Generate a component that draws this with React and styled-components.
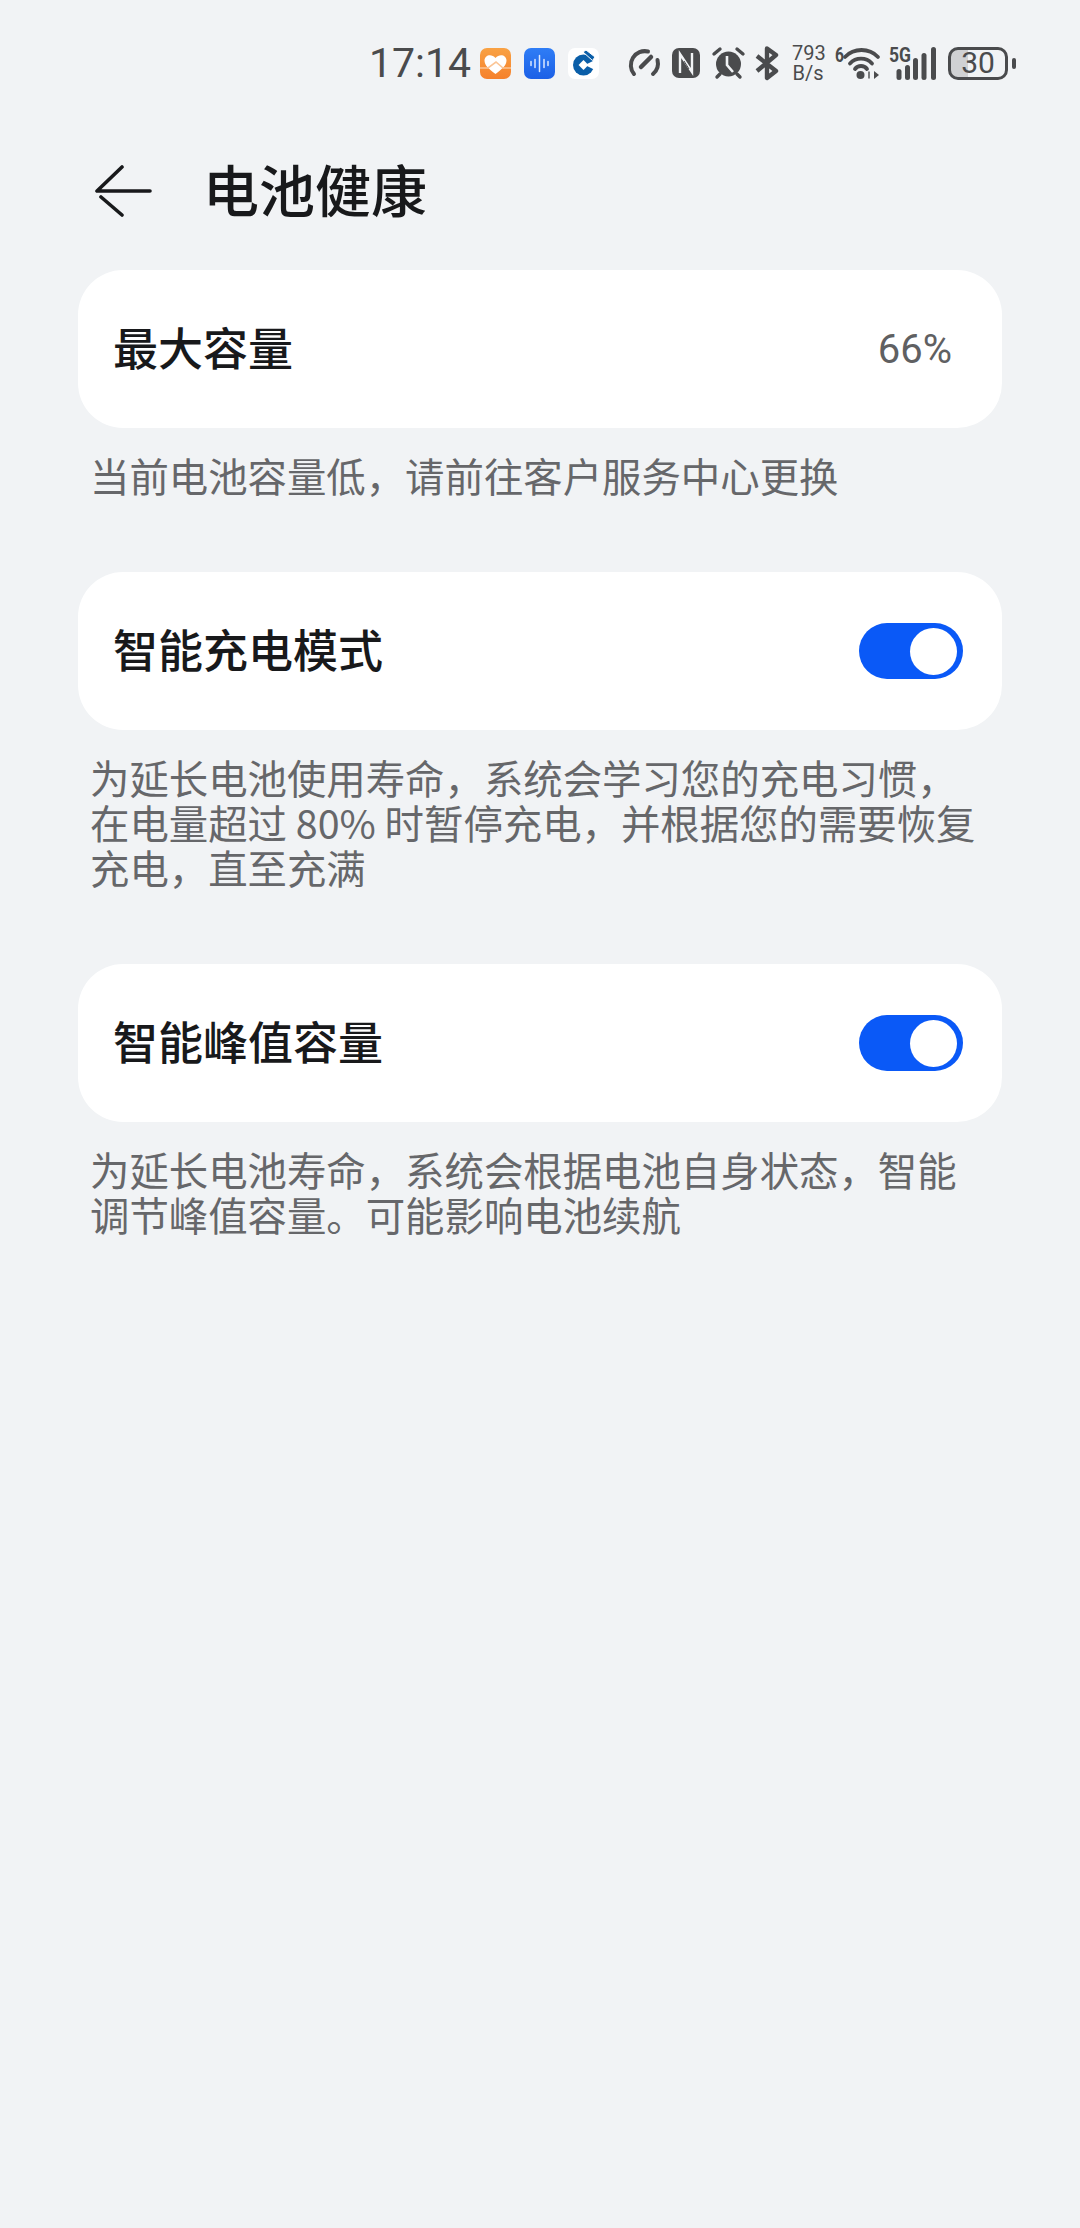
import React from 'react';
import styled, { createGlobalStyle } from 'styled-components';

const ink = '#4a4b4d';
const bg = '#f1f3f5';

const Global = createGlobalStyle`
  html, body { margin: 0; padding: 0; background: #f1f3f5; }
  * { box-sizing: border-box; }
`;

const Page = styled.div`
  width: 1080px;
  height: 2228px;
  overflow: hidden;
  background: #f1f3f5;
  font-family: "Noto Sans CJK SC", "Noto Sans", sans-serif;
`;

const StatusBar = styled.div`
  height: 64px;
  margin-top: 31px;
  padding-right: 64px;
  display: flex;
  justify-content: flex-end;
  align-items: center;
  color: #4a4b4d;
`;

const Time = styled.span`
  font-family: Roboto, sans-serif;
  font-size: 41px;
  line-height: 1;
  margin-right: 9px;
`;

const AppIcon = styled.svg`
  width: 31px;
  height: 31px;
  margin-right: ${(p) => p.$gap ?? 13}px;
  display: block;
  flex: none;
`;

const StatusIcon = styled.svg`
  display: block;
  flex: none;
  overflow: visible;
  margin-left: ${(p) => p.$gap || 0}px;
`;

const Speed = styled.div`
  width: 32px;
  margin-left: 13px;
  font-family: Roboto, sans-serif;
  font-size: 20px;
  line-height: 20px;
  text-align: center;
`;

const Battery = styled.div`
  width: 60px;
  height: 33px;
  margin-left: 11px;
  border: 3px solid #4a4b4d;
  border-radius: 10px;
  overflow: hidden;
  display: flex;
  align-items: center;
  justify-content: center;
  font-family: Roboto, sans-serif;
  font-size: 30px;
  line-height: 1;
  background: linear-gradient(90deg, #d0d1d3 32%, transparent 32%);
`;

const BatteryCap = styled.div`
  width: 4px;
  height: 11px;
  margin-left: 4px;
  border-radius: 2px;
  background: #4a4b4d;
`;

const Header = styled.div`
  height: 96px;
  margin-top: 48px;
  padding-left: 95px;
  display: flex;
  align-items: center;
`;

const BackArrow = styled.svg`
  display: block;
  flex: none;
`;

const Title = styled.h1`
  margin: 0 0 6px 51px;
  font-size: 56px;
  line-height: 1;
  font-weight: 500;
  color: #18191b;
`;

const Content = styled.div`
  margin-top: 31px;
  padding: 0 78px;
`;

const Section = styled.section`
  margin-bottom: 75px;
`;

const Card = styled.div`
  height: 158px;
  padding: 0 39px 0 35px;
  border-radius: 45px;
  background: #fff;
  display: flex;
  align-items: center;
  justify-content: space-between;
`;

const Label = styled.span`
  margin-bottom: 5px;
  font-size: 45px;
  font-weight: 500;
  color: #18191b;
`;

const Value = styled.span`
  font-family: Roboto, sans-serif;
  font-size: 40px;
  margin-right: 11px;
  color: #5f6062;
`;

const Switch = styled.div`
  width: 104px;
  height: 56px;
  padding: 4.5px 6px;
  border-radius: 28px;
  background: #0a59f7;
  display: flex;
  justify-content: flex-end;
  &::after {
    content: '';
    width: 47px;
    height: 47px;
    border-radius: 50%;
    background: #fff;
  }
`;

const Note = styled.p`
  margin: 24px 0 0;
  padding: 0 12px;
  font-size: 39.4px;
  line-height: 45px;
  color: #66676a;
`;

const sections = [
  { label: '最大容量', value: '66%', note: ['当前电池容量低，请前往客户服务中心更换'] },
  {
    label: '智能充电模式',
    note: ['为延长电池使用寿命，系统会学习您的充电习惯，', '在电量超过 80% 时暂停充电，并根据您的需要恢复', '充电，直至充满'],
  },
  {
    label: '智能峰值容量',
    note: ['为延长电池寿命，系统会根据电池自身状态，智能', '调节峰值容量。可能影响电池续航'],
  },
];

export default function App() {
  return (
    <Page>
      <Global />
      <StatusBar>
        <Time>17:14</Time>
        <AppIcon viewBox="0 0 31 31">
          <defs>
            <linearGradient id="heartBg" x1="0" y1="0" x2="0" y2="1">
              <stop offset="0" stopColor="#f9a244" />
              <stop offset="1" stopColor="#f5812c" />
            </linearGradient>
          </defs>
          <rect width="31" height="31" rx="7" fill="url(#heartBg)" />
          <path d="M15.5 26 C9 21 4.5 17.5 4.5 12.5 C4.5 7 11.5 5 15.5 10 C19.5 5 26.5 7 26.5 12.5 C26.5 17.5 22 21 15.5 26Z" fill="#fff" />
          <path d="M0 20 H8 L16 14 L23 20 H31" fill="none" stroke="#fbc596" strokeWidth="1.6" />
        </AppIcon>
        <AppIcon viewBox="0 0 31 31">
          <defs>
            <linearGradient id="voiceBg" x1="0" y1="0" x2="0" y2="1">
              <stop offset="0" stopColor="#2f7df6" />
              <stop offset="1" stopColor="#1c60e6" />
            </linearGradient>
          </defs>
          <rect width="31" height="31" rx="7" fill="url(#voiceBg)" />
          <path d="M7 13.5v4M11 11.5v8M15.5 7.5v16M20 11.5v8M24 13.5v4" stroke="#dbe8ff" strokeWidth="1.5" strokeLinecap="round" />
        </AppIcon>
        <AppIcon $gap={28} viewBox="0 0 31 31">
          <rect width="31" height="31" rx="7" fill="#fff" />
          <circle cx="15.5" cy="17" r="10.5" fill="#0a5ea8" />
          <path d="M17 17 L29 11 V23Z" fill="#fff" />
          <rect x="12" y="13.5" width="7" height="7" transform="rotate(45 15.5 17)" fill="#fff" />
          <path d="M15 4 L18 2 L27 9 L24.5 12.5Z" fill="#0a5ea8" stroke="#fff" strokeWidth="1" />
        </AppIcon>
        <StatusIcon width="33" height="30" viewBox="0 0 33 30" fill="none" stroke={ink} strokeWidth="4" strokeLinecap="round">
          <path d="M7 26 A14 14 0 0 1 21 3.5" />
          <path d="M30.5 12 A14 14 0 0 1 26 26" />
          <path d="M14 19 L24 9" strokeWidth="4.5" />
        </StatusIcon>
        <StatusIcon $gap={12} width="28" height="30" viewBox="0 0 28 30">
          <rect width="28" height="30" rx="7" fill={ink} />
          <path d="M8 25 V6 L20 24 V5" fill="none" stroke={bg} strokeWidth="2.4" />
          <path d="M12 13 L17 21" fill="none" stroke={ink} strokeWidth="1" />
        </StatusIcon>
        <StatusIcon $gap={12} width="33" height="32" viewBox="0 0 33 32" fill="none" stroke={ink} strokeWidth="3.4" strokeLinecap="round">
          <circle cx="16.5" cy="17" r="12.5" fill={ink} stroke="none" />
          <path d="M2 7 L8 2 M31 7 L25 2 M5 30 L8 27 M28 30 L25 27" />
          <path d="M15 9 V18 L21 25" stroke={bg} strokeWidth="2.6" strokeLinecap="butt" />
        </StatusIcon>
        <StatusIcon $gap={10} width="24" height="34" viewBox="0 0 24 34" fill="none" stroke={ink} strokeWidth="4.4" strokeLinejoin="round">
          <path d="M2 10 L21 25 L12 32 V2.5 L21 9 L2 25" />
        </StatusIcon>
        <Speed>793<br />B/s</Speed>
        <StatusIcon $gap={11} width="45" height="33" viewBox="0 0 45 33" fill="none" stroke={ink} strokeWidth="3.8" strokeLinecap="round">
          <text x="0" y="15" fontFamily="Roboto, sans-serif" fontWeight="700" fontSize="20" fill={ink} stroke="none" textLength="9" lengthAdjust="spacingAndGlyphs">6</text>
          <path d="M10 10 A23 23 0 0 1 43 10" />
          <path d="M15 16.5 A15 15 0 0 1 37 16.5" />
          <path d="M20 22 A7.5 7.5 0 0 1 32 22" />
          <circle cx="25.5" cy="28" r="4" fill={ink} stroke="none" />
          <path d="M39 24 L44 28 L39 32Z" fill={ink} stroke="none" />
          <path d="M34 25 V31" strokeWidth="1.4" />
        </StatusIcon>
        <StatusIcon $gap={9} width="48" height="33" viewBox="0 0 48 33" fill={ink}>
          <text x="0" y="15" fontFamily="Roboto, sans-serif" fontWeight="700" fontSize="20" textLength="22" lengthAdjust="spacingAndGlyphs">5G</text>
          <rect x="7.5" y="22" width="5" height="11" rx="2.5" />
          <rect x="16" y="18" width="5" height="15" rx="2.5" />
          <rect x="24" y="11" width="5" height="22" rx="2.5" />
          <rect x="32.5" y="6" width="5" height="27" rx="2.5" />
          <rect x="42" y="0" width="5" height="33" rx="2.5" />
        </StatusIcon>
        <Battery>30</Battery>
        <BatteryCap />
      </StatusBar>
      <Header>
        <BackArrow width="57" height="52" viewBox="0 0 57 52" fill="none" stroke="#18191b" strokeWidth="3.6" strokeLinecap="round" strokeLinejoin="round">
          <path d="M27 2 L2 26 H55" />
          <path d="M6 32 L27 50" />
        </BackArrow>
        <Title>电池健康</Title>
      </Header>
      <Content>
        {sections.map((s) => (
          <Section key={s.label}>
            <Card>
              <Label>{s.label}</Label>
              {s.value ? <Value>{s.value}</Value> : <Switch />}
            </Card>
            <Note>
              {s.note.map((line) => (
                <React.Fragment key={line}>{line}<br /></React.Fragment>
              ))}
            </Note>
          </Section>
        ))}
      </Content>
    </Page>
  );
}
